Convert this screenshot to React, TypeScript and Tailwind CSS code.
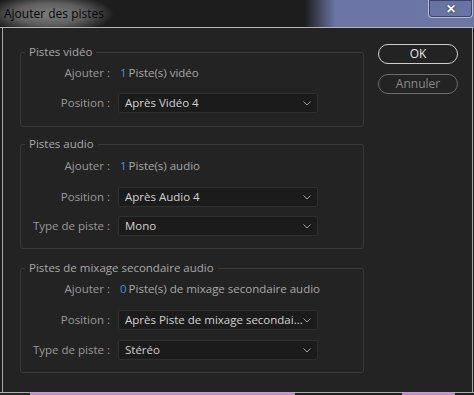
import React from 'react';

const Chevron = () => (
  <svg width="8" height="5" viewBox="0 0 8 5" className="shrink-0">
    <polyline points="0.5,0.5 4,4 7.5,0.5" fill="none" stroke="#a0a0a0" strokeWidth="1" />
  </svg>
);

const Select = ({ value }: { value: string }) => (
  <div className="ml-[8px] flex h-[20px] w-[200px] items-center justify-between rounded-[2px] border border-[#2f2f2f] bg-[#1b1b1b] pl-[6px] pr-[6px] text-[11.5px] text-[#d2d2d2]">
    <span className="whitespace-nowrap">{value}</span>
    <Chevron />
  </div>
);

const Label = ({ children }: { children: React.ReactNode }) => (
  <span className="w-[89px] shrink-0 text-right text-[#9a9a9a]">{children}</span>
);

const AddRow = ({ count, text, className }: { count: string; text: string; className: string }) => (
  <div className={`flex h-[18px] items-center ${className}`}>
    <Label>Ajouter :</Label>
    <span className="ml-[10px] text-[#4a8fd8]">{count}</span>
    <span className="ml-[2px] text-[#a8a8a8]">{text}</span>
  </div>
);

const SelectRow = ({ label, value, className }: { label: string; value: string; className: string }) => (
  <div className={`flex h-[20px] items-center ${className}`}>
    <Label>{label}</Label>
    <Select value={value} />
  </div>
);

const Group = ({ title, className, children }: { title: string; className: string; children: React.ReactNode }) => (
  <fieldset className={`ml-[17px] w-[344px] rounded-[3px] border border-[#393939] ${className}`}>
    <legend className="ml-[4px] px-[4px] leading-[16px] text-[#a8a8a8]">{title}</legend>
    {children}
  </fieldset>
);

export default function App() {
  return (
    <div className="flex h-[395px] w-[474px] flex-col overflow-hidden bg-[#1c1c1c] text-[11.5px] font-['Open_Sans',sans-serif]">
      {/* Title bar */}
      <div className="relative h-[27px] shrink-0 bg-[radial-gradient(ellipse_64px_20px_at_50px_14px,#7e7e7e_0%,#5e5e5e_55%,rgba(29,29,29,0)_100%),linear-gradient(90deg,#1d1d1d_0px,#1d1d1d_305px,#6b75a6_335px,#6d77a6_100%)]">
        <span className="absolute left-[4px] top-[6px] text-[12px] leading-[16px] text-[#050505]">Ajouter des pistes</span>
        <div className="absolute right-[1px] top-0 flex h-[18px] w-[45px] items-center justify-center rounded-b-[4px] border border-t-0 border-[#b8bcd2] bg-[#6a74a4] shadow-[inset_0_0_0_1px_#3c4468]">
          <span className="text-[12px] font-bold leading-none text-white [text-shadow:0_0_2px_#222]">✕</span>
        </div>
      </div>
      <div className="h-[1px] shrink-0 bg-[#b4b4b4]" />

      {/* Body */}
      <div className="ml-[2px] mr-[1px] flex h-[364px] shrink-0 border-x border-[#a8a8a8] bg-[#232323]">
        <div className="flex w-[375px] flex-col pt-[16px]">
          <Group title="Pistes vidéo" className="pb-[13px]">
            <AddRow count="1" text="Piste(s) vidéo" className="mt-[4px]" />
            <SelectRow label="Position :" value="Après Vidéo 4" className="mt-[11px]" />
          </Group>
          <Group title="Pistes audio" className="mt-[9px] pb-[12px]">
            <AddRow count="1" text="Piste(s) audio" className="mt-[5px]" />
            <SelectRow label="Position :" value="Après Audio 4" className="mt-[12px]" />
            <SelectRow label="Type de piste :" value="Mono" className="mt-[9px]" />
          </Group>
          <Group title="Pistes de mixage secondaire audio" className="mt-[11px] pb-[12px]">
            <AddRow count="0" text="Piste(s) de mixage secondaire audio" className="mt-[4px]" />
            <SelectRow label="Position :" value="Après Piste de mixage secondai..." className="mt-[12px]" />
            <SelectRow label="Type de piste :" value="Stéréo" className="mt-[10px]" />
          </Group>
        </div>
        <div className="flex flex-col pt-[16px]">
          <button className="h-[20px] w-[80px] rounded-full border border-[#cfcfcf] text-[12px] leading-[18px] text-[#e6e6e6]">OK</button>
          <button className="mt-[10px] h-[20px] w-[80px] rounded-full border border-[#6c6c6c] text-[12px] leading-[18px] text-[#8a8a8a]">Annuler</button>
        </div>
      </div>
      <div className="h-[1px] shrink-0 bg-[#b0b0b0]" />
      <div className="flex h-[2px] shrink-0">
        <div className="w-[30px] bg-[#262626]" />
        <div className="w-[265px] bg-[#c486cc]" />
        <div className="w-[107px] bg-[#222222]" />
        <div className="w-[53px] bg-[#c486cc]" />
        <div className="flex-1 bg-[#222222]" />
      </div>
    </div>
  );
}
